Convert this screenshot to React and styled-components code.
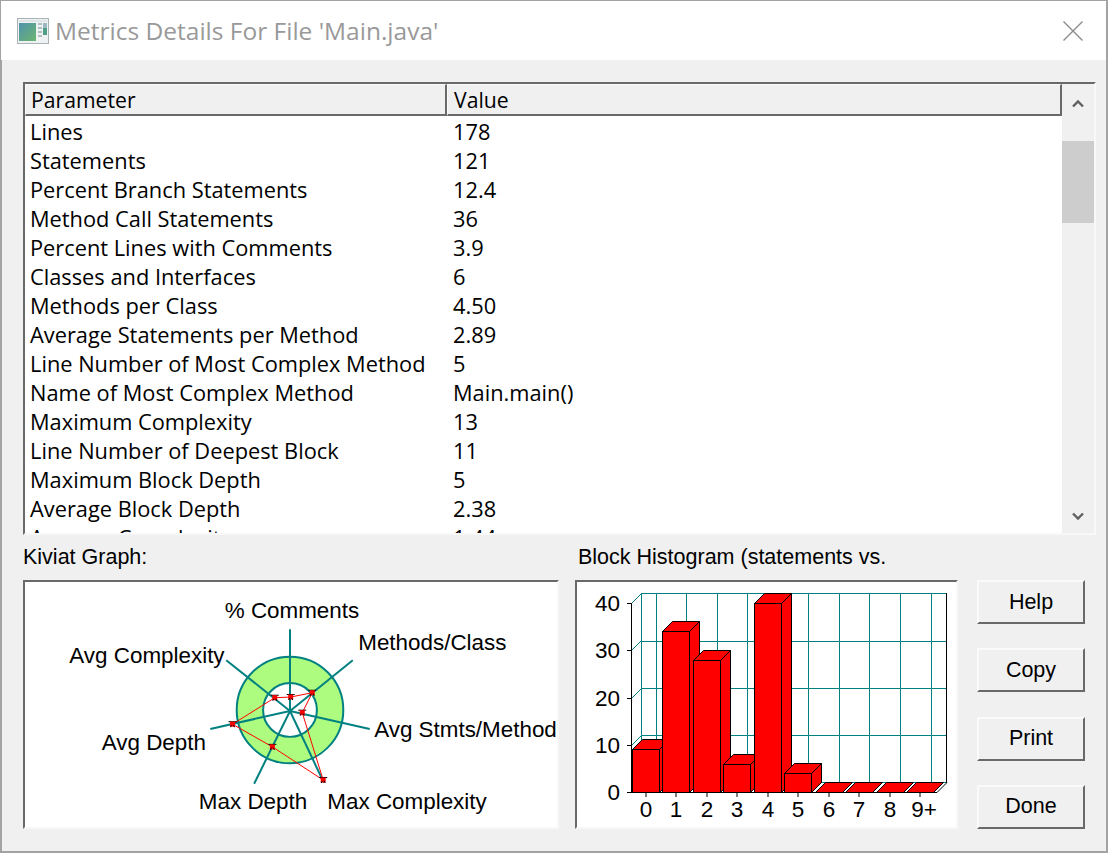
import React from 'react'
import styled, { createGlobalStyle } from 'styled-components'

const ROWS = [
  ['Lines', '178'],
  ['Statements', '121'],
  ['Percent Branch Statements', '12.4'],
  ['Method Call Statements', '36'],
  ['Percent Lines with Comments', '3.9'],
  ['Classes and Interfaces', '6'],
  ['Methods per Class', '4.50'],
  ['Average Statements per Method', '2.89'],
  ['Line Number of Most Complex Method', '5'],
  ['Name of Most Complex Method', 'Main.main()'],
  ['Maximum Complexity', '13'],
  ['Line Number of Deepest Block', '11'],
  ['Maximum Block Depth', '5'],
  ['Average Block Depth', '2.38'],
  ['Average Complexity', '1.44'],
]

const BUTTONS = ['Help', 'Copy', 'Print', 'Done']

function AppIcon() {
  return (
    <svg width="32" height="26" viewBox="0 0 32 26">
      <defs>
        <linearGradient id="pane" x1="0" y1="0" x2="1" y2="1">
          <stop offset="0" stopColor="#4f93ad" />
          <stop offset="1" stopColor="#6cb56f" />
        </linearGradient>
      </defs>
      <rect x="0.5" y="0.5" width="31" height="25" fill="#eef2f2" stroke="#a9b2b4" />
      <rect x="2" y="2" width="28" height="2" fill="#dfe5e6" />
      <rect x="2" y="5" width="17" height="18" fill="url(#pane)" />
      <rect x="21" y="5" width="4" height="2" fill="#b4bfc2" />
      <rect x="21" y="9" width="4" height="2" fill="#b4bfc2" />
      <rect x="21" y="13" width="4" height="2" fill="#b4bfc2" />
      <rect x="21" y="17" width="4" height="2" fill="#b4bfc2" />
      <rect x="26" y="5" width="4" height="5" fill="#9db8c4" />
      <rect x="26" y="10" width="4" height="7" fill="#4f9f86" />
    </svg>
  )
}

function Kiviat() {
  // page coords minus panel origin (25, 581)
  const cx = 266
  const cy = 129
  const spokes = [[266, 47], [329, 78], [346, 147], [300, 201], [230, 202], [186, 147], [202, 78]]
  const pts = [[266.7, 115], [288.3, 110.7], [278.3, 130.7], [299.3, 198.3], [248.3, 165], [208.3, 142.3], [250.7, 115.7]]
  const labels = [
    ['% Comments', 200.5, 36],
    ['Methods/Class', 334.5, 68],
    ['Avg Stmts/Method', 350.5, 155],
    ['Max Complexity', 303.5, 227],
    ['Max Depth', 174.5, 227],
    ['Avg Depth', 77, 168],
    ['Avg Complexity', 44.5, 81],
  ]
  return (
    <svg width="534" height="245" viewBox="0 0 534 245">
      <circle cx={cx} cy={cy - 1} r="53.5" fill="#adfc7f" stroke="#008080" strokeWidth="2" />
      <circle cx={cx} cy={cy - 1} r="27" fill="#fff" stroke="#008080" strokeWidth="2" />
      {spokes.map(([x, y], i) => (
        <line key={i} x1={cx} y1={cy} x2={x} y2={y} stroke="#008080" strokeWidth="2" />
      ))}
      <polygon points={pts.map(p => p.join(',')).join(' ')} fill="none" stroke="#ff0000" strokeWidth="1" />
      {pts.map(([x, y], i) => (
        <g key={i}>
          <line x1={x - 4} y1={y - 2.5} x2={x + 4} y2={y - 2.5} stroke="#000" strokeWidth="1" />
          <rect x={x - 2.5} y={y - 2.5} width="5" height="5" fill="#ff0000" />
          <line x1={x - 2} y1={y + 3} x2={x - 1} y2={y + 1} stroke="#000" strokeWidth="1" />
          <line x1={x + 2} y1={y + 3} x2={x + 1} y2={y + 1} stroke="#000" strokeWidth="1" />
        </g>
      ))}
      {labels.map(([t, x, y]) => (
        <ChartText key={t} x={x} y={y}>{t}</ChartText>
      ))}
    </svg>
  )
}

function Histogram() {
  // page coords minus panel origin (577, 581)
  const values = [
    [55.5, 167.5], [85.5, 49.5], [116.5, 78.5], [146.5, 182.5], [177.5, 21.5],
    [207.5, 191.5], [238.5, 210.5], [268.5, 210.5], [299.5, 210.5], [329.5, 210.5],
  ]
  const xLabels = ['0', '1', '2', '3', '4', '5', '6', '7', '8', '9+']
  const floorY = 210.5
  const d = 10
  const w = 27
  const grids = [11.5, 59.5, 106.5, 153.5, 200.5]
  const verts = [79.5, 109.5, 140.5, 170.5, 201.5, 231.5, 262.5, 292.5, 323.5, 354.5]
  const ticks = [21.5, 68.5, 116.5, 163.5, 210.5]
  const yLabels = ['40', '30', '20', '10', '0']
  return (
    <svg width="379" height="245" viewBox="0 0 379 245">
      <g stroke="#008080" strokeWidth="1" fill="none">
        {grids.map(y => <line key={y} x1="64.5" y1={y} x2="370" y2={y} />)}
        {verts.map(x => <line key={x} x1={x} y1="11" x2={x} y2="201" />)}
        <line x1="64.5" y1="11" x2="64.5" y2="201" />
      </g>
      {ticks.map(y => (
        <g key={y}>
          <line x1="54.5" y1={y} x2="64.5" y2={y - 10} stroke="#008080" />
          <line x1="50" y1={y} x2="55" y2={y} stroke="#000" />
        </g>
      ))}
      <line x1="54.5" y1="21" x2="54.5" y2="211" stroke="#000" />
      <line x1="54.5" y1="210.5" x2="360" y2="210.5" stroke="#000" />
      <line x1="360" y1="210.5" x2="370" y2="200.5" stroke="#000" />
      <line x1="369.5" y1="11" x2="369.5" y2="201" stroke="#000" />
      {values.map(([x, top], i) => (
        <g key={i} stroke="#000" strokeWidth="1" fill="#ff0000">
          <polygon points={`${x},${top} ${x + d},${top - d} ${x + w + d},${top - d} ${x + w},${top}`} />
          {top < floorY && <polygon points={`${x + w},${top} ${x + w + d},${top - d} ${x + w + d},${floorY - d} ${x + w},${floorY}`} />}
          {top < floorY && <rect x={x} y={top} width={w} height={floorY - top} />}
        </g>
      ))}
      {xLabels.map((t, i) => {
        const c = values[i][0] + w / 2
        return (
          <g key={t}>
            <line x1={c} y1="210" x2={c} y2="215" stroke="#000" />
            <ChartText x={t === '9+' ? c + 4 : c} y="235" textAnchor="middle">{t}</ChartText>
          </g>
        )
      })}
      {yLabels.map((t, i) => (
        <ChartText key={t} x="43" y={ticks[i] + 7.5} textAnchor="end">{t}</ChartText>
      ))}
    </svg>
  )
}

function Chevron({ down }) {
  return (
    <svg width="12" height="9" viewBox="0 0 12 9">
      <path d={down ? 'M1 1.5 L6 6.5 L11 1.5' : 'M1 7.5 L6 2.5 L11 7.5'} fill="none" stroke="#606060" strokeWidth="2.4" />
    </svg>
  )
}

export default function App() {
  return (
    <>
      <GlobalStyle />
      <Window>
        <TitleBar>
          <AppIcon />
          <Title>Metrics Details For File 'Main.java'</Title>
          <CloseIcon viewBox="0 0 20 20">
            <path d="M0.5 0.5 L19.5 19.5 M19.5 0.5 L0.5 19.5" stroke="#8c8c8c" strokeWidth="1.4" fill="none" />
          </CloseIcon>
        </TitleBar>
        <Body>
          <ListFrame>
            <ListMain>
              <HeaderRow>
                <HeaderCell $w={422} $pad={5}>Parameter</HeaderCell>
                <HeaderCell $grow $pad={6}>Value</HeaderCell>
              </HeaderRow>
              <Rows>
                {ROWS.map(([name, value]) => (
                  <Row key={name}>
                    <NameCell>{name}</NameCell>
                    <span>{value}</span>
                  </Row>
                ))}
              </Rows>
            </ListMain>
            <ScrollBar>
              <ScrollBtn><Chevron /></ScrollBtn>
              <Thumb />
              <ScrollBtn $down><Chevron down /></ScrollBtn>
            </ScrollBar>
          </ListFrame>
          <Bottom>
            <Section $w={536} $gap={16}>
              <Caption>Kiviat Graph:</Caption>
              <GraphBox><Kiviat /></GraphBox>
            </Section>
            <Section $w={383} $gap={19}>
              <Caption $pad={3}>Block Histogram (statements vs.</Caption>
              <GraphBox><Histogram /></GraphBox>
            </Section>
            <Buttons>
              {BUTTONS.map(b => <Button key={b}>{b}</Button>)}
            </Buttons>
          </Bottom>
        </Body>
      </Window>
    </>
  )
}

const GlobalStyle = createGlobalStyle`
  html, body {
    margin: 0;
    padding: 0;
    background: #fff;
  }
  * {
    box-sizing: border-box;
  }
`

const Window = styled.div`
  width: 1108px;
  height: 853px;
  display: flex;
  flex-direction: column;
  border: 1px solid #a3a3a3;
  border-bottom-width: 2px;
  border-right-width: 2px;
  background: #f0f0f0;
`

const TitleBar = styled.div`
  height: 59px;
  flex: none;
  background: #fff;
  display: flex;
  align-items: center;
  padding: 0 23px 0 16px;
`

const Title = styled.div`
  flex: 1;
  margin-left: 6px;
  font-family: "Open Sans", sans-serif;
  font-size: 24.5px;
  color: #999;
  white-space: nowrap;
`

const CloseIcon = styled.svg`
  width: 20px;
  height: 20px;
`

const Body = styled.div`
  flex: 1;
  min-height: 0;
  display: flex;
  flex-direction: column;
  padding: 22px 10px 0 21px;
  border-left: 1px solid #a3a3a3;
`

const ListFrame = styled.div`
  height: 453px;
  flex: none;
  display: flex;
  background: #fff;
  border: 2px solid;
  border-color: #696969 #f8f8f8 #f8f8f8 #696969;
`

const ListMain = styled.div`
  flex: 1;
  min-width: 0;
  display: flex;
  flex-direction: column;
  overflow: hidden;
`

const HeaderRow = styled.div`
  display: flex;
  height: 32px;
  flex: none;
`

const HeaderCell = styled.div`
  ${p => (p.$grow ? 'flex: 1;' : `width: ${p.$w}px;`)}
  background: #f0f0f0;
  border: 1px solid;
  border-color: #fafafa #696969 #696969 #fafafa;
  border-right-width: 2px;
  border-bottom-width: 2px;
  padding-left: ${p => p.$pad}px;
  line-height: 29px;
  font-family: "Open Sans", sans-serif;
  font-size: 21.2px;
  color: #000;
`

const Rows = styled.div`
  padding-top: 1px;
`

const Row = styled.div`
  display: flex;
  height: 29px;
  line-height: 29px;
  font-family: "Open Sans", sans-serif;
  font-size: 21.8px;
  color: #000;
  white-space: nowrap;
`

const NameCell = styled.span`
  width: 428px;
  padding-left: 5px;
`

const ScrollBar = styled.div`
  width: 32px;
  flex: none;
  display: flex;
  flex-direction: column;
  background: #f0f0f0;
`

const ScrollBtn = styled.div`
  height: ${p => (p.$down ? '34px' : '38px')};
  flex: none;
  display: flex;
  align-items: center;
  justify-content: center;
  margin-top: ${p => (p.$down ? 'auto' : '0')};
`

const Thumb = styled.div`
  height: 82px;
  margin-top: 19px;
  background: #cdcdcd;
`

const Bottom = styled.div`
  flex: 1;
  min-height: 0;
  display: flex;
  align-items: flex-end;
  padding-bottom: 22px;
`

const Section = styled.div`
  width: ${p => p.$w}px;
  margin-right: ${p => p.$gap}px;
  display: flex;
  flex-direction: column;
`

const Caption = styled.div`
  font-family: "Liberation Sans", sans-serif;
  font-size: 21.5px;
  line-height: 25px;
  color: #000;
  margin-bottom: 10px;
  padding-left: ${p => p.$pad || 0}px;
  white-space: nowrap;
`

const GraphBox = styled.div`
  height: 249px;
  background: #fff;
  border: 2px solid;
  border-color: #696969 #f8f8f8 #f8f8f8 #696969;
  display: flex;
`

const ChartText = styled.text`
  font-family: "Liberation Sans", sans-serif;
  font-size: 22.5px;
  fill: #000;
`

const Buttons = styled.div`
  width: 108px;
  height: 249px;
  display: flex;
  flex-direction: column;
  justify-content: space-between;
`

const Button = styled.button`
  height: 44px;
  width: 108px;
  padding: 0;
  background: #f0f0f0;
  border: 2px solid;
  border-color: #fafafa #696969 #696969 #fafafa;
  font-family: "Liberation Sans", sans-serif;
  font-size: 21.5px;
  color: #000;
`
